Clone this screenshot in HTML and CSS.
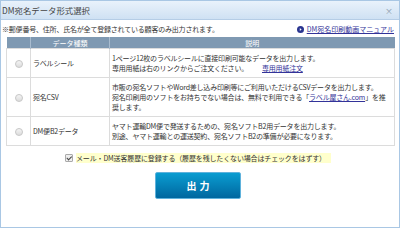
FILE: index.html
```html
<!DOCTYPE html>
<html lang="ja">
<head>
    <meta charset="UTF-8">
    <meta name="viewport" content="width=device-width, initial-scale=1.0">
    <title>DM宛名データ形式選択</title>
    <link rel="stylesheet" href="styles.css">
</head>
<body>
    <div class="dialog">
        <div class="titlebar">
            <span class="title">DM宛名データ形式選択</span>
            <span class="close">&times;</span>
        </div>

        <div class="content">
            <div class="note-row">
                <span class="note">※郵便番号、住所、氏名が全て登録されている顧客のみ出力されます。</span>
                <a class="manual" href="#">
                    <svg class="manual-icon" viewBox="0 0 10 10" width="7" height="7">
                        <circle cx="5" cy="5" r="5" fill="#2a3590"/>
                        <path d="M4 2.8 L6.6 5 L4 7.2 Z" fill="#fff"/>
                    </svg>DM宛名印刷動画マニュアル</a>
            </div>

            <table class="types">
                <tr>
                    <th class="col-radio"></th>
                    <th class="col-name">データ種類</th>
                    <th>説明</th>
                </tr>
                <tr>
                    <td class="col-radio"><span class="radio"></span></td>
                    <td class="col-name">ラベルシール</td>
                    <td>1ページ12枚のラベルシールに直接印刷可能なデータを出力します。<br>専用用紙は右のリンクからご注文ください。<a class="paper" href="#">専用用紙注文</a></td>
                </tr>
                <tr>
                    <td class="col-radio"><span class="radio"></span></td>
                    <td class="col-name">宛名CSV</td>
                    <td>市販の宛名ソフトやWord差し込み印刷等にご利用いただけるCSVデータを出力します。<br>宛名印刷用のソフトをお持ちでない場合は、無料で利用できる「<a href="#">ラベル屋さん.com</a>」を推奨します。</td>
                </tr>
                <tr>
                    <td class="col-radio"><span class="radio"></span></td>
                    <td class="col-name">DM便B2データ</td>
                    <td>ヤマト運輸DM便で発送するための、宛名ソフトB2用データを出力します。<br>別途、ヤマト運輸との運送契約、宛名ソフトB2の準備が必要になります。</td>
                </tr>
            </table>

            <div class="history">
                <span class="check"></span>
                <span class="mark">メール・DM送客履歴に登録する（履歴を残したくない場合はチェックをはずす）</span>
            </div>

            <div class="actions">
                <button class="output">出力</button>
            </div>
        </div>
    </div>
</body>
</html>
```

FILE: styles.css
```css
body {
    font-family: "Noto Sans CJK JP", "Noto Sans", sans-serif;
    margin: 0;
    padding: 0;
    background-color: #fff;
    color: #333;
}

.dialog {
    width: 400px;
    height: 228px;
    box-sizing: border-box;
    border: 1px solid #a9c7e4;
    display: flex;
    flex-direction: column;
}

.titlebar {
    height: 18px;
    display: flex;
    align-items: center;
    justify-content: space-between;
    padding: 0 6px 0 1px;
    background: linear-gradient(#e9f2fb, #cfe1f3);
    border-bottom: 1px solid #b5cde6;
}

    .titlebar .title {
        font-size: 8.4px;
        color: #444;
    }

    .titlebar .close {
        font-size: 8px;
        color: #8a9aaa;
    }

.content {
    flex: 1;
    padding: 4px 5px 0 1px;
    font-size: 7px;
}

.note-row {
    display: flex;
    justify-content: space-between;
    align-items: center;
    height: 10px;
    line-height: 10px;
}

    .note-row .note {
        letter-spacing: -0.2px;
    }

    .note-row .manual {
        color: #333399;
        display: flex;
        align-items: center;
        gap: 3px;
    }

.types {
    margin: 3px 0 0 4px;
    width: 389px;
    border-collapse: collapse;
    line-height: 10px;
}

    .types th {
        background-color: #7f99b2;
        color: #fff;
        font-weight: normal;
        height: 11px;
        padding: 0;
        border-left: 1px solid #a9bccf;
    }

        .types th:first-child {
            border-left: none;
        }

    .types td {
        border: 1px solid #dcdcdc;
        padding: 4px 2px;
        vertical-align: middle;
        letter-spacing: -0.2px;
    }

    .types .col-radio {
        width: 23px;
        text-align: center;
        padding: 0;
    }

    .types .col-name {
        width: 74px;
    }

    .types a {
        color: #333399;
    }

    .types .paper {
        margin-left: 14px;
    }

.radio {
    display: inline-block;
    width: 6px;
    height: 6px;
    border-radius: 50%;
    border: 1px solid #c8c8c8;
    background: linear-gradient(#f4f4f4, #dcdcdc);
    vertical-align: middle;
}

.history {
    display: flex;
    align-items: center;
    justify-content: center;
    gap: 3px;
    margin-top: 7px;
    height: 10px;
}

    .history .check {
        width: 6px;
        height: 6px;
        border: 1px solid #aaa;
        border-radius: 1px;
        background-color: #eee;
        position: relative;
    }

        .history .check::after {
            content: "";
            position: absolute;
            left: 2px;
            top: 0;
            width: 1.5px;
            height: 3.5px;
            border: solid #444;
            border-width: 0 1.2px 1.2px 0;
            transform: rotate(45deg);
        }

    .history .mark {
        background-color: #ffffcc;
        line-height: 10px;
        padding-right: 5px;
        letter-spacing: -0.15px;
    }

.actions {
    display: flex;
    justify-content: center;
    margin-top: 9px;
}

.output {
    width: 86px;
    height: 27px;
    border: 1px solid #5fb2dc;
    border-radius: 2px;
    background: linear-gradient(#0a9dd1, #00679f);
    color: #fff;
    font-family: "Noto Sans CJK JP", sans-serif;
    font-size: 10px;
    font-weight: bold;
    letter-spacing: 3px;
    padding: 0 0 0 3px;
    cursor: pointer;
}
```
